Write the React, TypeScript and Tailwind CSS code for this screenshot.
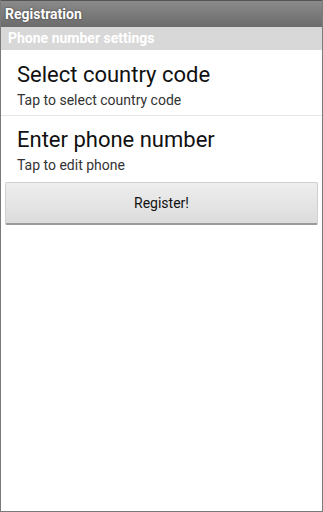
export default function App() {
  return (
    <div className="h-[512px] w-[323px] overflow-hidden bg-white border-x border-b border-[#7a7a7a] flex flex-col font-['Roboto',sans-serif]">
      <div className="h-[27px] shrink-0 bg-gradient-to-b from-[#8a8a8a] to-[#6c6c6c] border-t border-[#555] flex items-center pl-[4px]">
        <span className="text-[14px] font-bold text-white [text-shadow:0_0_2px_#333]">Registration</span>
      </div>
      <div className="h-[23px] shrink-0 bg-[#d8d8d8] flex items-center pl-[7px]">
        <span className="text-[14px] font-bold text-white">Phone number settings</span>
      </div>
      <div className="pl-[16px] pt-[11px] h-[66px] border-b border-[#e6e6e6]">
        <div className="text-[22px] leading-[28px] text-[#111]">Select country code</div>
        <div className="text-[14px] leading-[18px] text-[#333] mt-[2px]">Tap to select country code</div>
      </div>
      <div className="pl-[16px] pt-[10px] h-[66px]">
        <div className="text-[22px] leading-[28px] text-[#111]">Enter phone number</div>
        <div className="text-[14px] leading-[18px] text-[#333] mt-[2px]">Tap to edit phone</div>
      </div>
      <div className="px-[4px]">
        <button className="w-full h-[43px] bg-gradient-to-b from-[#eeeeee] to-[#dcdcdc] border border-[#cfcfcf] border-b-2 border-b-[#9a9a9a] rounded-[2px] text-[14px] text-[#111]">
          Register!
        </button>
      </div>
    </div>
  );
}
